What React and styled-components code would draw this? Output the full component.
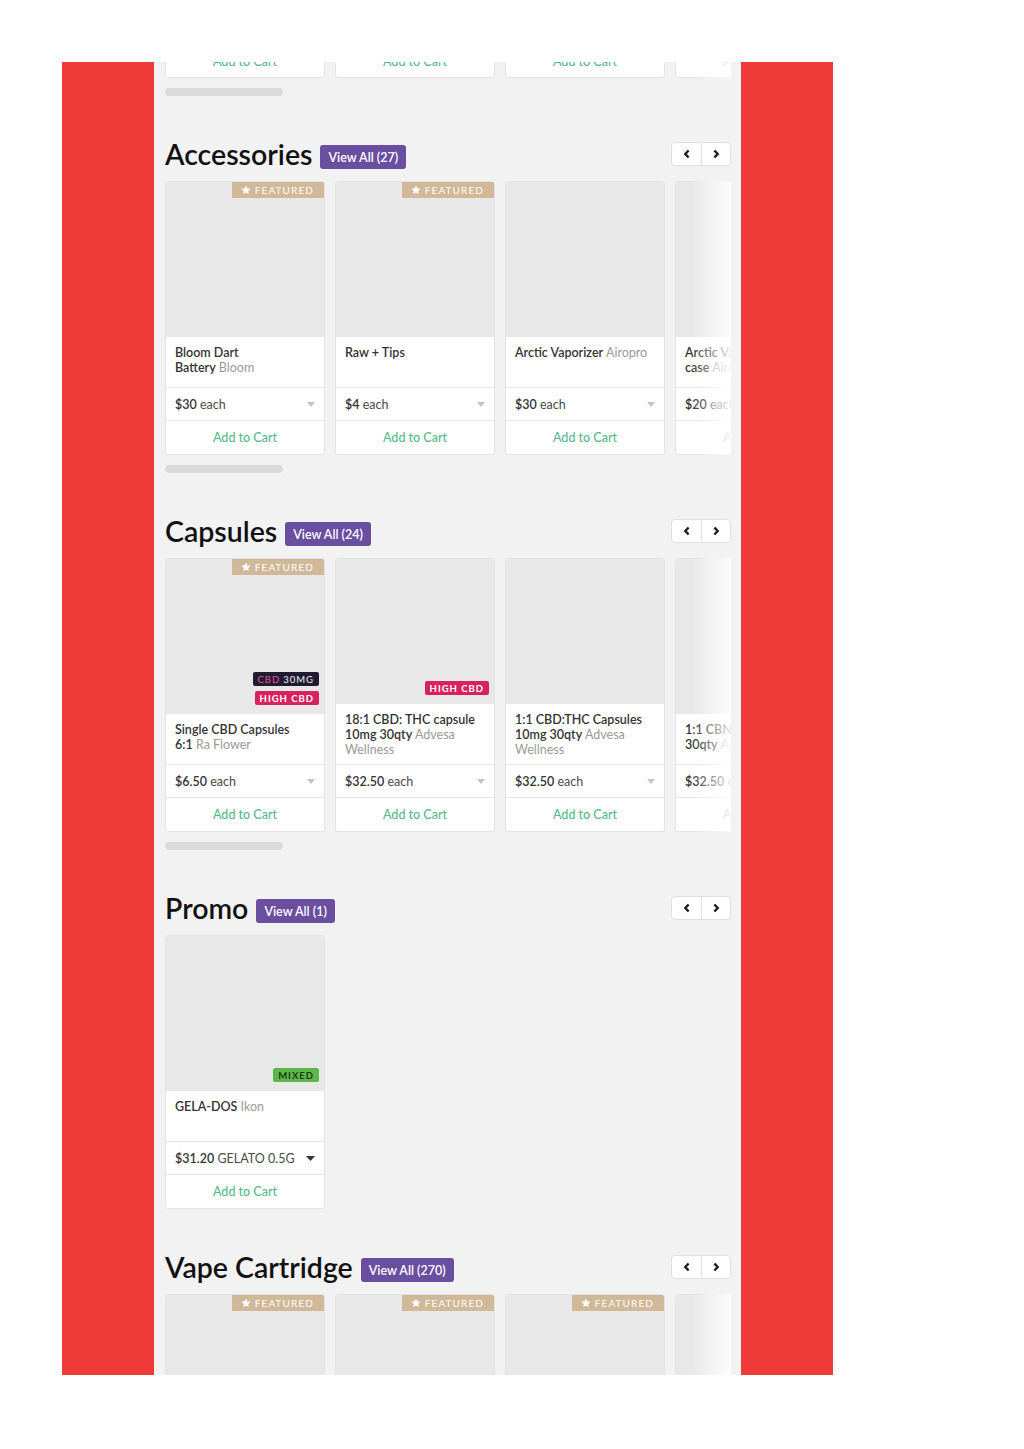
import React from 'react'
import styled, {createGlobalStyle} from 'styled-components'

const GlobalStyle = createGlobalStyle`
  body {
    margin: 0;
    background: #fff;
    font-family: Lato, "Noto Sans", "Liberation Sans", sans-serif;
  }
  * { box-sizing: border-box; }
`;

const Frame = styled.div`
  margin: 62px;
  width: 771px;
  height: 1313px;
  padding: 0 92px;
  background: #ee3b3a;
`;

const Panel = styled.div`
  height: 100%;
  padding: 0 10px 0 11px;
  background: #f2f2f2;
  overflow: hidden;
`;

const Section = styled.section`
  padding-top: 46px;
`;

const Header = styled.div`
  display: flex;
  align-items: center;
  justify-content: space-between;
  height: 24px;
  margin-bottom: 15px;
`;

const TitleGroup = styled.div`
  display: flex;
  align-items: center;
`;

const Title = styled.h2`
  margin: 0;
  font-size: 28.5px;
  line-height: 24px;
  font-weight: 600;
  color: #111;
`;

const ViewAll = styled.a`
  display: flex;
  align-items: center;
  height: 24px;
  margin: 6px 0 0 8px;
  padding: 0 8px;
  border-radius: 3px;
  background: #6a4e9f;
  color: #fff;
  font-size: 12.5px;
  font-weight: 600;
  cursor: pointer;
`;

const Nav = styled.div`
  display: flex;
  height: 24px;
  border: 1px solid #e0e0e0;
  border-radius: 4px;
  background: #fff;
  overflow: hidden;
`;

const NavButton = styled.button`
  display: flex;
  align-items: center;
  justify-content: center;
  width: 29px;
  padding: 0;
  border: none;
  background: none;
  cursor: pointer;
  & + & { border-left: 1px solid #e0e0e0; }
`;

const Track = styled.div`
  position: relative;
  display: flex;
  gap: 10px;
  overflow: hidden;
  margin-top: ${p => p.$offset || 0}px;
  ${p => p.$fade && `
    &::after {
      content: "";
      position: absolute;
      top: 0;
      right: 0;
      bottom: 0;
      width: 40px;
      background: linear-gradient(to right, rgba(255,255,255,0), rgba(255,255,255,0.9));
    }
  `}
`;

const Scrollbar = styled.div`
  width: 118px;
  height: 8px;
  margin-top: 10px;
  border-radius: 4px;
  background: #dadada;
`;

const Card = styled.div`
  display: flex;
  flex-direction: column;
  flex-shrink: 0;
  width: 160px;
  height: ${p => p.$tail ? 34 : 274}px;
  border: 1px solid #e3e3e3;
  border-radius: 3px;
  background: #fff;
  overflow: hidden;
`;

const Media = styled.div`
  position: relative;
  flex: 1;
  background: #e8e8e8;
`;

const Featured = styled.div`
  position: absolute;
  top: 0;
  right: 0;
  display: flex;
  align-items: center;
  gap: 4px;
  height: 16px;
  padding: 0 10px 0 9px;
  background: #d0b898;
  color: #fff;
  font-size: 10px;
  letter-spacing: 1.1px;
`;

const Tags = styled.div`
  position: absolute;
  right: 5px;
  bottom: 9px;
  display: flex;
  flex-direction: column;
  align-items: flex-end;
  gap: 5px;
`;

const tagColors = {
  dark: ['#221c33', '#f0eef5'],
  pink: ['#d8215f', '#fff'],
  green: ['#5cb84c', '#1c3d10'],
};

const Tag = styled.span`
  display: flex;
  align-items: center;
  height: 14px;
  padding: 0 5px;
  border-radius: 2px;
  background: ${p => tagColors[p.$kind][0]};
  color: ${p => tagColors[p.$kind][1]};
  font-size: 9.5px;
  font-weight: ${p => p.$kind === 'dark' ? 400 : 700};
  letter-spacing: 1px;
  b { color: #e6559a; font-weight: 400; margin-right: 3px; }
`;

const Info = styled.div`
  min-height: 50px;
  padding: 8px 8px 7px 9px;
  font-size: 12.5px;
  line-height: 15px;
`;

const Name = styled.span`
  color: #333;
  font-weight: 600;
`;

const Brand = styled.span`
  color: #9a9a9a;
`;

const Keep = styled.span`
  white-space: nowrap;
`;

const PriceRow = styled.div`
  display: flex;
  align-items: center;
  justify-content: space-between;
  height: 33px;
  padding: 0 9px;
  border-top: 1px solid #e6e6e6;
  font-size: 12.5px;
  color: #4a4a4a;
  b { color: #333; font-weight: 600; }
`;

const CartRow = styled.div`
  display: flex;
  align-items: center;
  justify-content: center;
  height: ${p => p.$tail ? 32 : 34}px;
  border-top: ${p => p.$tail ? 'none' : '1px solid #e6e6e6'};
  color: #55b98a;
  font-size: 12.5px;
  font-weight: 500;
`;

const Star = () => (
  <svg width="10" height="10" viewBox="0 0 24 24" fill="#fff">
    <path d="M12 1l3.3 7 7.7.9-5.7 5.3 1.5 7.6L12 18l-6.8 3.8 1.5-7.6L1 8.9 8.7 8z" />
  </svg>
);

const Caret = ({dark}) => (
  <svg width={dark ? 9 : 8} height="5" viewBox="0 0 8 5" preserveAspectRatio="none">
    <path d="M0 0h8L4 5z" fill={dark ? '#333' : '#c4c4c4'} />
  </svg>
);

const Chevron = ({dir}) => (
  <svg width="8" height="10" viewBox="0 0 8 10">
    <path d={dir === 'left' ? 'M5.6 1.5L2.3 5l3.3 3.5' : 'M2.4 1.5L5.7 5 2.4 8.5'}
      fill="none" stroke="#1b1b2b" strokeWidth="2.4" />
  </svg>
);

const sections = [
  {
    title: 'Accessories', count: 27, products: [
      {name: 'Bloom Dart Battery', brand: 'Bloom', price: '$30', unit: 'each', featured: true},
      {name: 'Raw + Tips', brand: '', price: '$4', unit: 'each', featured: true},
      {name: 'Arctic Vaporizer', brand: 'Airopro', price: '$30', unit: 'each'},
      {name: 'Arctic Vaporizer case', brand: 'Airopro', price: '$20', unit: 'each'},
    ],
  },
  {
    title: 'Capsules', count: 24, products: [
      {name: 'Single CBD Capsules 6:1', brand: 'Ra Flower', price: '$6.50', unit: 'each', featured: true,
        tags: [{kind: 'dark', cbd: '30MG'}, {kind: 'pink', text: 'HIGH CBD'}]},
      {name: '18:1 CBD: THC capsule 10mg 30qty', brand: 'Advesa Wellness', price: '$32.50', unit: 'each',
        tags: [{kind: 'pink', text: 'HIGH CBD'}]},
      {name: '1:1 CBD:THC Capsules 10mg 30qty', brand: 'Advesa Wellness', price: '$32.50', unit: 'each'},
      {name: '1:1 CBN:THC Capsules 30qty', brand: 'Advesa', price: '$32.50', unit: 'each'},
    ],
  },
  {
    title: 'Promo', count: 1, products: [
      {name: 'GELA-DOS', brand: 'Ikon', price: '$31.20', unit: 'GELATO 0.5G', dark: true,
        tags: [{kind: 'green', text: 'MIXED'}]},
    ],
  },
  {
    title: 'Vape Cartridge', count: 270, products: [
      {name: 'Cartridge', brand: '', price: '$40', unit: 'each', featured: true},
      {name: 'Cartridge', brand: '', price: '$40', unit: 'each', featured: true},
      {name: 'Cartridge', brand: '', price: '$40', unit: 'each', featured: true},
      {name: 'Cartridge', brand: '', price: '$40', unit: 'each'},
    ],
  },
];

// the last word of the name stays on one line with the first word of the brand
function ProductName({name, brand}) {
  if (!brand) return <Name>{name}</Name>;
  const words = name.split(' ');
  const last = words.pop();
  const [first, ...rest] = brand.split(' ');
  return (
    <>
      {words.length > 0 && <Name>{words.join(' ')} </Name>}
      <Keep><Name>{last}</Name> <Brand>{first}</Brand></Keep>
      {rest.length > 0 && <Brand> {rest.join(' ')}</Brand>}
    </>
  );
}

function ProductCard({p}) {
  return (
    <Card>
      <Media>
        {p.featured && <Featured><Star />FEATURED</Featured>}
        {p.tags && (
          <Tags>
            {p.tags.map((t, i) => (
              <Tag key={i} $kind={t.kind}>
                {t.cbd ? <><b>CBD</b>{t.cbd}</> : t.text}
              </Tag>
            ))}
          </Tags>
        )}
      </Media>
      <Info>
        <ProductName name={p.name} brand={p.brand} />
      </Info>
      <PriceRow>
        <span><b>{p.price}</b> {p.unit}</span>
        <Caret dark={p.dark} />
      </PriceRow>
      <CartRow>Add to Cart</CartRow>
    </Card>
  );
}

export default function App() {
  return (
    <>
      <GlobalStyle />
      <Frame>
        <Panel>
          <Track $offset={-18} $fade>
            {[0, 1, 2, 3].map(i => (
              <Card key={i} $tail><CartRow $tail>Add to Cart</CartRow></Card>
            ))}
          </Track>
          <Scrollbar />
          {sections.map(s => {
            const many = s.products.length > 1;
            return (
              <Section key={s.title}>
                <Header>
                  <TitleGroup>
                    <Title>{s.title}</Title>
                    <ViewAll>View All ({s.count})</ViewAll>
                  </TitleGroup>
                  <Nav>
                    <NavButton><Chevron dir="left" /></NavButton>
                    <NavButton><Chevron dir="right" /></NavButton>
                  </Nav>
                </Header>
                <Track $fade={many}>
                  {s.products.map((p, i) => <ProductCard key={i} p={p} />)}
                </Track>
                {many && <Scrollbar />}
              </Section>
            );
          })}
        </Panel>
      </Frame>
    </>
  );
}
